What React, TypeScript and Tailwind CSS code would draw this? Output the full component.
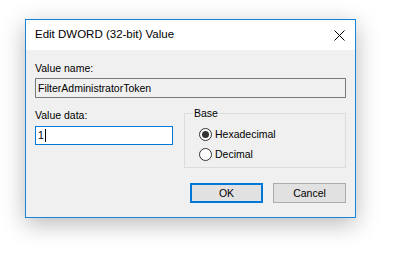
import React from "react";

const font = "font-['Liberation_Sans',Arial,sans-serif]";

function Radio({ label, checked }: { label: string; checked?: boolean }) {
  return (
    <div className="flex items-center h-[14px]">
      <span className="w-[13px] h-[13px] rounded-full border border-[#333333] bg-white flex items-center justify-center">
        {checked && <span className="w-[7px] h-[7px] rounded-full bg-[#333333]" />}
      </span>
      <span className="ml-[3px] text-[10.5px] leading-[14px] text-black">{label}</span>
    </div>
  );
}

export default function App() {
  return (
    <div className={`w-[412px] h-[271px] bg-white pt-[19px] pl-[25px] ${font}`}>
      <div className="w-[331px] h-[199px] border border-[#1883d7] bg-[#f0f0f0] flex flex-col shadow-[0_6px_22px_rgba(0,0,0,0.28)]">
        {/* title bar */}
        <div className="h-[30px] bg-white flex items-center justify-between pl-[9px] pr-[9px]">
          <span className="text-[11.5px] text-black leading-none">Edit DWORD (32-bit) Value</span>
          <svg width="11" height="11" viewBox="0 0 11 11" className="mr-[1px]">
            <path d="M0.5 0.5 L10.5 10.5 M10.5 0.5 L0.5 10.5" stroke="#000" strokeWidth="1" />
          </svg>
        </div>

        <div className="flex flex-col px-[9px] text-[10.5px] text-black">
          <span className="mt-[11px] leading-[14px]">Value name:</span>
          <div className="mt-[3px] h-[20px] border border-[#7a7a7a] bg-[#f0f0f0] flex items-center pl-[2px] leading-none">
            FilterAdministratorToken
          </div>

          <div className="flex mt-[10px]">
            <div className="w-[138px] flex flex-col">
              <span className="leading-[14px]">Value data:</span>
              <div className="mt-[4px] h-[19px] border border-[#0078d7] bg-white flex items-center pl-[2px] leading-none">
                <span>1</span>
                <span className="w-px h-[13px] bg-black ml-[1px]" />
              </div>
            </div>

            <div className="ml-[11px] w-[162px] mt-[5px] h-[55px] border border-[#dcdcdc] relative">
              <span className="absolute left-[8px] -top-[8px] bg-[#f0f0f0] px-[1px] leading-[14px]">Base</span>
              <div className="flex flex-col pl-[14px] pt-[13px] gap-[6px]">
                <Radio label="Hexadecimal" checked />
                <Radio label="Decimal" />
              </div>
            </div>
          </div>

          <div className="flex justify-end gap-[10px] mt-[15px]">
            <button className="w-[73px] h-[20px] border-2 border-[#0078d7] bg-[#e1e1e1] text-[10.5px] leading-none text-black">
              OK
            </button>
            <button className="w-[73px] h-[20px] border border-[#adadad] bg-[#e1e1e1] text-[10.5px] leading-none text-black">
              Cancel
            </button>
          </div>
        </div>
      </div>
    </div>
  );
}
